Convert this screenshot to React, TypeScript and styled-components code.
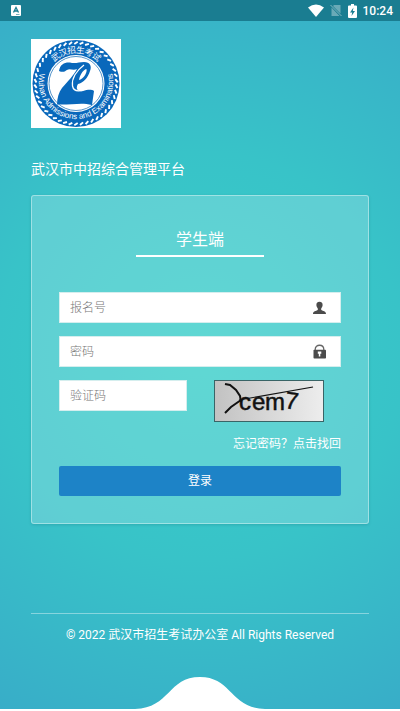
import React from "react";
import styled, { createGlobalStyle } from "styled-components";

const GlobalStyle = createGlobalStyle`
  *, *::before, *::after { box-sizing: border-box; }
  body {
    margin: 0;
    font-family: Roboto, "Noto Sans CJK SC", sans-serif;
    color: #fff;
  }
`;

const Page = styled.div`
  min-height: 100vh;
  display: flex;
  flex-direction: column;
  background: radial-gradient(circle at center, #38cec9 0%, #38c3c8 50%, #38adc8 100%);
`;

const StatusBar = styled.header`
  height: 21px;
  flex: none;
  display: flex;
  align-items: center;
  padding: 0 7px 0 11px;
  background: #1a7d91;
`;

const StatusIcons = styled.div`
  margin-left: auto;
  display: flex;
  align-items: center;
  gap: 6px;
`;

const Clock = styled.time`
  font-size: 12px;
  line-height: 20px;
  font-weight: 500;
`;

const Main = styled.main`
  flex: 1;
  display: flex;
  flex-direction: column;
  padding: 18px 31px 0;
`;

const Logo = styled.svg`
  display: block;
  width: 90px;
  height: 89px;
  background: #fff;
`;

const SiteTitle = styled.h1`
  margin: 30px 0 15px;
  font-size: 14px;
  line-height: 22px;
  font-weight: 400;
`;

const Card = styled.form`
  display: flex;
  flex-direction: column;
  padding: 31px 27px 27px;
  border: 1px solid rgba(255, 255, 255, 0.4);
  border-radius: 3px;
  background: rgba(255, 255, 255, 0.2);
  box-shadow: 0 1px 3px rgba(0, 80, 90, 0.2);
`;

const CardTitle = styled.h2`
  align-self: center;
  width: 128px;
  margin: 0 0 35px;
  padding-bottom: 2px;
  border-bottom: 2px solid #fff;
  font-size: 16px;
  line-height: 26px;
  font-weight: 400;
  text-align: center;
`;

const Fields = styled.div`
  display: grid;
  grid-template-columns: minmax(0, 1fr);
  gap: 13px;
`;

const Field = styled.label`
  height: 31px;
  min-width: 0;
  display: flex;
  align-items: center;
  padding: 0 13px 0 10px;
  background: #fff;
  border: 1px solid #d5eeee;
`;

const TextBox = styled.input`
  flex: 1;
  width: 100%;
  min-width: 0;
  height: 28px;
  padding: 0;
  border: 0;
  outline: 0;
  background: transparent;
  font: 300 12px/20px Roboto, "Noto Sans CJK SC", sans-serif;
  color: #333;
  &::placeholder { color: #777; opacity: 1; }
`;

const CodeRow = styled.div`
  display: grid;
  grid-template-columns: minmax(0, 1fr) minmax(0, 1fr);
  column-gap: 27px;
  align-items: start;
`;

const CaptchaButton = styled.button`
  display: block;
  width: 110px;
  height: 42px;
  padding: 0;
  border: 1px solid #396466;
  background: linear-gradient(90deg, #c2c2c2, #ededed);
`;

const ForgotLink = styled.a`
  align-self: flex-end;
  margin-top: 12px;
  font-size: 12px;
  line-height: 20px;
  font-weight: 400;
  color: #fff;
  text-decoration: none;
`;

const LoginButton = styled.button`
  height: 30px;
  margin-top: 12px;
  padding: 0;
  border: 0;
  border-radius: 2px;
  background: #1d83c7;
  color: #fff;
  font: 400 12px/20px Roboto, "Noto Sans CJK SC", sans-serif;
`;

const Footer = styled.footer`
  margin-top: 89px;
  padding-top: 11px;
  border-top: 1px solid rgba(255, 255, 255, 0.4);
  font-size: 12px;
  line-height: 20px;
  text-align: center;
`;

const Wave = styled.svg`
  display: block;
  flex: none;
  align-self: center;
  width: 130px;
  height: 32px;
`;

const BottomEdge = styled.div`
  flex: none;
  height: 2px;
  background: #fff;
`;

const RIM_DASHES = 46;
const EMBLEM_NAME = ["武", "汉", "招", "生", "考", "试"];

function Emblem() {
  return (
    <Logo viewBox="0 0 90 89" role="img" aria-label="武汉招生考试">
      <defs>
        <path id="arcBottom" d="M8.500 35a37.300 37.300 0 1 0 73 0" />
      </defs>
      <circle cx="45" cy="44.500" r="43.500" fill="#0968bb" />
      {Array.from({ length: RIM_DASHES }, (_, i) => (
        <path
          key={i}
          d="M43.300 5L46.700 2.800"
          stroke="#fff"
          strokeWidth="1.900"
          transform={`rotate(${(i * 360) / RIM_DASHES} 45 44.500)`}
        />
      ))}
      <circle cx="45" cy="44.500" r="28.500" fill="#fff" />
      <circle cx="45" cy="44.500" r="27" fill="none" stroke="#2878bd" strokeWidth="0.800" />
      {EMBLEM_NAME.map((char, i) => (
        <text
          key={char}
          x="45"
          y="14"
          textAnchor="middle"
          fill="#fff"
          fontFamily="'Noto Sans CJK SC', sans-serif"
          fontSize="8.500"
          transform={`rotate(${(i - 2.5) * 15} 45 44.500)`}
        >
          {char}
        </text>
      ))}
      <text fill="#fff" fontFamily="'Liberation Sans', sans-serif" fontSize="8">
        <textPath href="#arcBottom" startOffset="50%" textAnchor="middle">Wuhan Admissions and Examinations</textPath>
      </text>
      <path
        fill="#0968bb"
        d="M28 32C29 25 34 23 39 23.500C44 25 48 23 53 23C59 23 61 27 59 32C57 39 52 44 47 45C44 50 47 53 52 52C56 51 60 50 63 52L61 66C50 63 42 66 26 65.500C26 59 28 53 31 49C37 42 43 36 46 30C42 32 39 29 36 31C34 32 33 34 28 32Z"
      />
      <path fill="#fff" d="M48 41C49 35 53 30 55.500 30C56.500 34 52 40 48 41Z" />
      <path fill="none" stroke="#fff" strokeWidth="1.300" d="M53 26C45 32 40.500 40 41.500 47C43 54 51 53 58 47" />
    </Logo>
  );
}

function KeyboardIcon() {
  return (
    <svg width="10" height="11" viewBox="0 0 10 11" aria-hidden="true">
      <rect width="10" height="11" rx="1" fill="#fff" />
      <path d="M2.500 7.500L5 2.500L7.500 7.500M3.500 6H6.500" fill="none" stroke="#1a7d91" strokeWidth="1.300" />
      <path d="M5 9.500H8.500" stroke="#1a7d91" strokeWidth="0.600" />
    </svg>
  );
}

function WifiIcon() {
  return (
    <svg width="16" height="13" viewBox="0 0 16 13" aria-hidden="true">
      <path d="M0 3.500Q8-2.500 16 3.500L8 13Z" fill="#fff" />
    </svg>
  );
}

function NoSimIcon() {
  return (
    <svg width="12" height="13" viewBox="0 0 12 13" aria-hidden="true">
      <path d="M4 1H10.500V9.500L3 2ZM1.500 3.500L9.500 12H1.500Z" fill="#fff" opacity=".35" />
      <path d="M.5 1L11.500 12" stroke="#fff" opacity=".45" />
    </svg>
  );
}

function BatteryIcon() {
  return (
    <svg width="9" height="14" viewBox="0 0 9 14" aria-hidden="true">
      <path d="M3 0H6V1.500H8Q9 1.500 9 2.500V13Q9 14 8 14H1Q0 14 0 13V2.500Q0 1.500 1 1.500H3Z" fill="#fff" />
      <path d="M5.500 3.500L2 8.500H4.200L3.500 12L7 7H4.800Z" fill="#1a7d91" />
    </svg>
  );
}

function UserIcon() {
  return (
    <svg width="15" height="14" viewBox="0 0 15 14" aria-hidden="true">
      <path
        d="M7.500 .8C9.700 .8 10.800 2.300 10.600 4.300C10.500 5.800 9.800 6.700 9.200 7.500V9C11 10 14 10.200 14 13H1C1 10.200 4 10 5.800 9V7.500C5.200 6.700 4.500 5.800 4.400 4.300C4.200 2.300 5.300 .8 7.500 .8Z"
        fill="#4b4b4b"
      />
    </svg>
  );
}

function LockIcon() {
  return (
    <svg width="15" height="15" viewBox="0 0 15 15" aria-hidden="true">
      <path d="M3.200 6.500V5.500C3.200-.2 11.800-.2 11.800 5.500V6.500" fill="none" stroke="#666" strokeWidth="1.300" />
      <rect x="1.500" y="5.800" width="12.500" height="8.700" rx="0.800" fill="#4b4b4b" />
      <path d="M5.800 7.500H9.300V9.800H8.300V12.500H6.800V9.800H5.800Z" fill="#fff" />
    </svg>
  );
}

function CaptchaDrawing() {
  return (
    <svg width="108" height="40" viewBox="0 0 108 40" aria-hidden="true">
      <g fontFamily="'Liberation Sans', sans-serif" fontSize="24" fill="#111" stroke="#111" strokeWidth="0.500">
        <text x="24" y="29">c</text>
        <text x="37" y="29">e</text>
        <text x="50" y="29">m</text>
        <text x="70" y="28" transform="rotate(8 76 20)">7</text>
      </g>
      <path d="M10 3L15 4L21 9L25 15L26 21M10 32L16 26L26 19" fill="none" stroke="#111" strokeWidth="2" />
      <path d="M24 19L98 6" stroke="#111" strokeWidth="1.200" />
    </svg>
  );
}

export default function App() {
  return (
    <>
      <GlobalStyle />
      <Page>
        <StatusBar>
          <KeyboardIcon />
          <StatusIcons>
            <WifiIcon />
            <NoSimIcon />
            <BatteryIcon />
            <Clock>10:24</Clock>
          </StatusIcons>
        </StatusBar>
        <Main>
          <Emblem />
          <SiteTitle>武汉市中招综合管理平台</SiteTitle>
          <Card onSubmit={(e) => e.preventDefault()}>
            <CardTitle>学生端</CardTitle>
            <Fields>
              <Field>
                <TextBox type="text" placeholder="报名号" aria-label="报名号" />
                <UserIcon />
              </Field>
              <Field>
                <TextBox type="password" placeholder="密码" aria-label="密码" />
                <LockIcon />
              </Field>
              <CodeRow>
                <Field>
                  <TextBox type="text" placeholder="验证码" aria-label="验证码" />
                </Field>
                <CaptchaButton type="button" aria-label="验证码">
                  <CaptchaDrawing />
                </CaptchaButton>
              </CodeRow>
            </Fields>
            <ForgotLink href="#forgot">忘记密码？点击找回</ForgotLink>
            <LoginButton type="submit">登录</LoginButton>
          </Card>
          <Footer>© 2022 武汉市招生考试办公室 All Rights Reserved</Footer>
        </Main>
        <Wave viewBox="0 0 130 32" aria-hidden="true">
          <path d="M0 32C35 31 33 0 65 0S95 31 130 32Z" fill="#fff" />
        </Wave>
        <BottomEdge />
      </Page>
    </>
  );
}
